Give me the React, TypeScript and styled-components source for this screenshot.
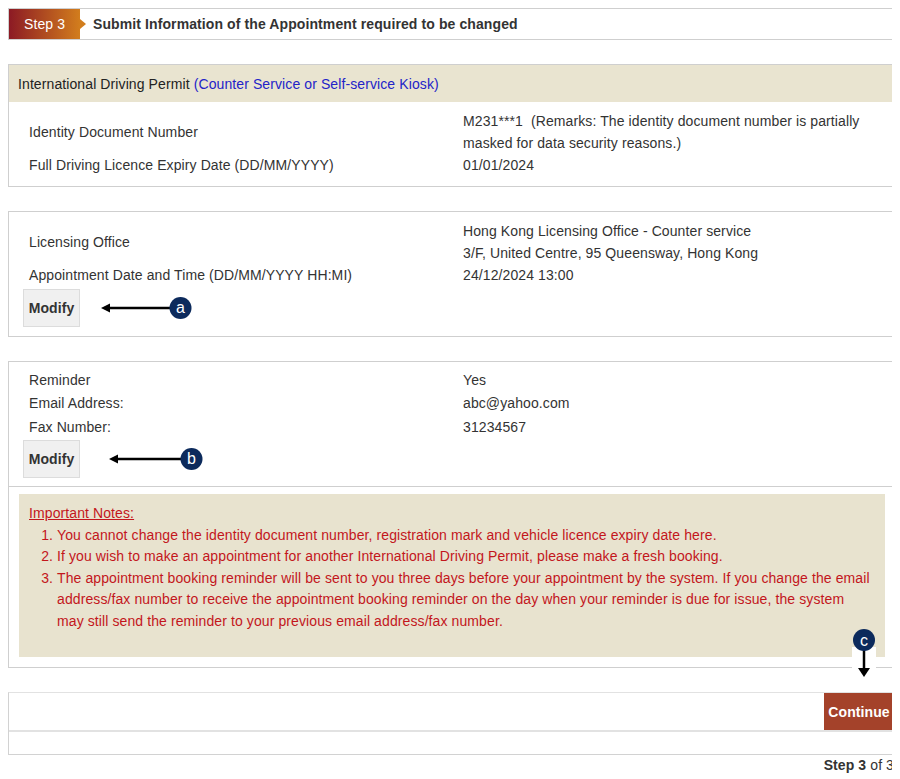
import React from 'react';
import styled, { createGlobalStyle } from 'styled-components';

const GlobalStyle = createGlobalStyle`
  html {
    overflow: hidden;
  }
  body {
    margin: 8px 8px 0;
    background: #fff;
    color: #333;
    font-family: "Liberation Sans", Arial, sans-serif;
    font-size: 14px;
    letter-spacing: 0.1px;
  }
`;

const Page = styled.div`
  width: 888px;
`;

const StepBar = styled.div`
  display: flex;
  align-items: center;
  height: 30px;
  border: 1px solid #cfcfcf;
`;

const StepBadge = styled.div`
  position: relative;
  width: 71px;
  height: 100%;
  display: flex;
  align-items: center;
  justify-content: center;
  color: #fff;
  background: linear-gradient(to right, #8c1a24, #d27d1d);

  &::after {
    content: '';
    position: absolute;
    right: -6px;
    top: 10px;
    border-left: 6px solid #d27d1d;
    border-top: 5px solid transparent;
    border-bottom: 5px solid transparent;
  }
`;

const StepTitle = styled.div`
  margin-left: 13px;
  font-weight: bold;
  color: #333;
`;

const Section = styled.div`
  margin-top: 24px;
  border: 1px solid #cfcfcf;
`;

const SectionHead = styled.div`
  height: 37px;
  display: flex;
  align-items: center;
  padding-left: 9px;
  background: #e9e4d0;
  color: #222;
`;

const Blue = styled.span`
  margin-left: 4px;
  color: #2323c8;
`;

const Body = styled.div<{ $top: number; $bottom: number }>`
  padding: ${(p) => p.$top}px 12px ${(p) => p.$bottom}px 14px;
`;

const Row = styled.div<{ $lh: number }>`
  display: grid;
  grid-template-columns: 434px 1fr;
  align-items: center;
  padding-left: 6px;
  line-height: ${(p) => p.$lh}px;
`;

const ModifyRow = styled.div<{ $top: number }>`
  display: flex;
  align-items: center;
  margin-top: ${(p) => p.$top}px;
`;

const ModifyButton = styled.button`
  width: 57px;
  height: 38px;
  padding: 0;
  border: 1px solid #dcdcdc;
  background: #f0f0f0;
  color: #333;
  font-family: "Liberation Sans", Arial, sans-serif;
  font-size: 14px;
  font-weight: bold;
  letter-spacing: 0.1px;
`;

const PointerSvg = styled.svg<{ $gap: number }>`
  margin-left: ${(p) => p.$gap}px;
  display: block;
`;

const NotesWrap = styled.div`
  position: relative;
  border-top: 1px solid #cfcfcf;
  padding: 7px 10px 10px;
`;

const NotesBox = styled.div`
  background: #e8e3cf;
  color: #c3161c;
  line-height: 21.5px;
  padding: 9px 12px 25px 10px;
`;

const NotesTitle = styled.div`
  text-decoration: underline;
`;

const NotesList = styled.ol`
  margin: 0;
  padding-left: 28px;
`;

const DownPointer = styled.svg`
  position: absolute;
  right: 18px;
  bottom: -12px;
`;

const ActionBox = styled.div`
  margin-top: 24px;
  border: 1px solid #d2d2d2;
  border-top-color: #e2e2e2;
`;

const ActionRow = styled.div`
  display: flex;
  justify-content: flex-end;
  height: 37px;
  padding-right: 1px;
  border-bottom: 2px solid #e2e2e2;
`;

const ContinueButton = styled.button`
  width: 70px;
  height: 37px;
  padding: 0;
  border: none;
  background: #a4422a;
  color: #fff;
  font-family: "Liberation Sans", Arial, sans-serif;
  font-size: 14px;
  font-weight: bold;
  letter-spacing: 0.1px;
`;

const EmptyRow = styled.div`
  height: 22px;
`;

const Footer = styled.div`
  text-align: right;
  line-height: 20px;
  padding-right: 2px;
  color: #333;
`;

const Pointer = ({ label, gap, length }: { label: string; gap: number; length: number }) => (
  <PointerSvg $gap={gap} width={length + 12} height={24} viewBox={`0 0 ${length + 12} 24`}>
    <line x1={6} y1={12} x2={length} y2={12} stroke="#000" strokeWidth={2.5} />
    <polygon points="0,12 9,7.5 9,16.5" fill="#000" />
    <circle cx={length + 0.5} cy={12} r={11} fill="#0c2a5c" />
    <text
      x={length + 0.5}
      y={17}
      textAnchor="middle"
      fill="#fff"
      fontSize="16"
      fontFamily="Liberation Sans, Arial, sans-serif"
    >
      {label}
    </text>
  </PointerSvg>
);

const App = () => {
  return (
    <Page>
      <GlobalStyle />
      <StepBar>
        <StepBadge>Step 3</StepBadge>
        <StepTitle>Submit Information of the Appointment required to be changed</StepTitle>
      </StepBar>

      <Section>
        <SectionHead>
          International Driving Permit
          <Blue>(Counter Service or Self-service Kiosk)</Blue>
        </SectionHead>
        <Body $top={8} $bottom={10}>
          <Row $lh={22}>
            <span>Identity Document Number</span>
            <span>
              M231***1&nbsp;&nbsp;(Remarks: The identity document number is partially masked for data
              security reasons.)
            </span>
          </Row>
          <Row $lh={22}>
            <span>Full Driving Licence Expiry Date (DD/MM/YYYY)</span>
            <span>01/01/2024</span>
          </Row>
        </Body>
      </Section>

      <Section>
        <Body $top={8} $bottom={9}>
          <Row $lh={22}>
            <span>Licensing Office</span>
            <span>
              Hong Kong Licensing Office - Counter service
              <br />
              3/F, United Centre, 95 Queensway, Hong Kong
            </span>
          </Row>
          <Row $lh={22}>
            <span>Appointment Date and Time (DD/MM/YYYY HH:MI)</span>
            <span>24/12/2024 13:00</span>
          </Row>
          <ModifyRow $top={3}>
            <ModifyButton>Modify</ModifyButton>
            <Pointer label="a" gap={21} length={79} />
          </ModifyRow>
        </Body>
      </Section>

      <Section>
        <Body $top={6.5} $bottom={8}>
          <Row $lh={23.5}>
            <span>Reminder</span>
            <span>Yes</span>
          </Row>
          <Row $lh={23.5}>
            <span>Email Address:</span>
            <span>abc@yahoo.com</span>
          </Row>
          <Row $lh={23.5}>
            <span>Fax Number:</span>
            <span>31234567</span>
          </Row>
          <ModifyRow $top={1}>
            <ModifyButton>Modify</ModifyButton>
            <Pointer label="b" gap={29} length={82} />
          </ModifyRow>
        </Body>
        <NotesWrap>
          <NotesBox>
            <NotesTitle>Important Notes:</NotesTitle>
            <NotesList>
              <li>
                You cannot change the identity document number, registration mark and vehicle licence
                expiry date here.
              </li>
              <li>
                If you wish to make an appointment for another International Driving Permit, please make
                a fresh booking.
              </li>
              <li>
                The appointment booking reminder will be sent to you three days before your appointment by
                the system. If you change the email address/fax number to receive the appointment booking
                reminder on the day when your reminder is due for issue, the system may still send the
                reminder to your previous email address/fax number.
              </li>
            </NotesList>
          </NotesBox>
          <DownPointer width={26} height={50} viewBox="0 0 26 50">
            <rect x={1} y={18} width={24} height={32} fill="#fff" />
            <line x1={13} y1={20} x2={13} y2={41} stroke="#000" strokeWidth={2.5} />
            <polygon points="7,39 19,39 13,48" fill="#000" />
            <circle cx={13} cy={11} r={11} fill="#0c2a5c" />
            <text
              x={13}
              y={16.5}
              textAnchor="middle"
              fill="#fff"
              fontSize="16"
              fontFamily="Liberation Sans, Arial, sans-serif"
            >
              c
            </text>
          </DownPointer>
        </NotesWrap>
      </Section>

      <ActionBox>
        <ActionRow>
          <ContinueButton>Continue</ContinueButton>
        </ActionRow>
        <EmptyRow />
      </ActionBox>

      <Footer>
        <b>Step 3</b> of 3
      </Footer>
    </Page>
  );
};

export default App;
